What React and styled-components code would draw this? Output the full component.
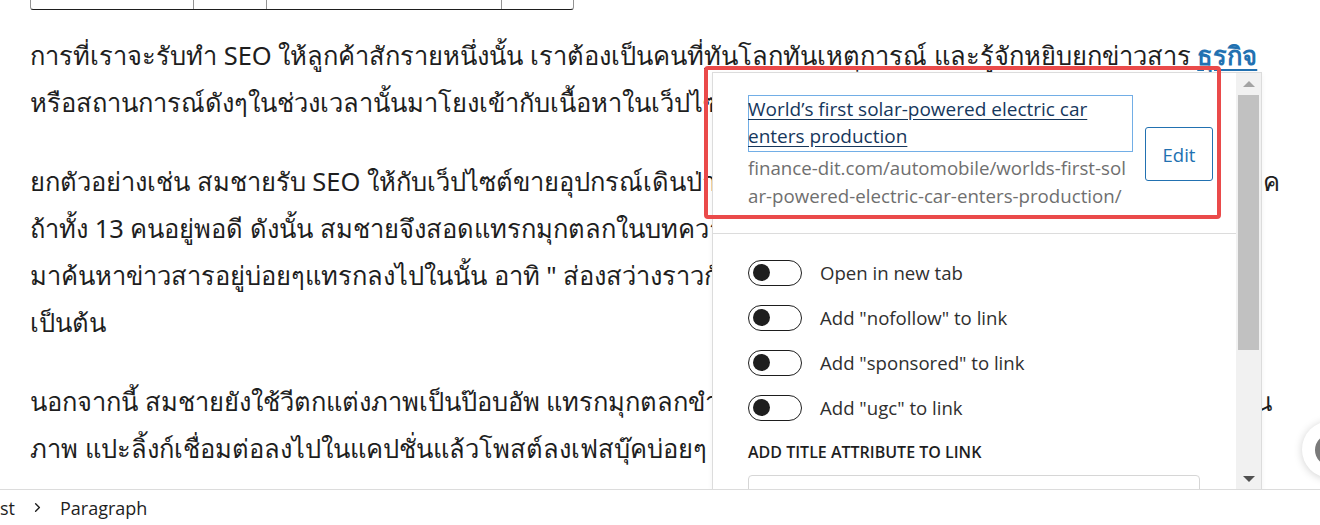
import React from 'react';
import styled, { createGlobalStyle } from 'styled-components';
import { ChevronRight } from 'lucide-react';

const GlobalStyle = createGlobalStyle`
  html, body {
    margin: 0;
    padding: 0;
    background: #fff;
    overflow: hidden;
  }
  body {
    font-family: "Noto Sans", "Open Sans", sans-serif;
    color: #1e1e1e;
  }
`;

const restOfParagraphs = [
  [
    'ยกตัวอย่างเช่น สมชายรับ SEO ให้กับเว็ปไซต์ขายอุปกรณ์เดินป่า ซึ่งช่วงนั้นมีข่าวทีมหมูป่าติดอยู่ในถ้ำหลวง เด็กๆทุกค',
    'ถ้าทั้ง 13 คนอยู่พอดี ดังนั้น สมชายจึงสอดแทรกมุกตลกในบทความ ที่เกี่ยวกับการเดินป่าและเข้าถ้ำ',
    'มาค้นหาข่าวสารอยู่บ่อยๆแทรกลงไปในนั้น อาทิ " ส่องสว่างราวกับมีไฟฉายคู่ใจ "',
    'เป็นต้น',
  ],
  [
    'นอกจากนี้ สมชายยังใช้วีตกแต่งภาพเป็นป๊อบอัพ แทรกมุกตลกขำขันเกี่ยวกับข่าวดังนั้น ให้คนอยากแชร์กันเป็นจำนวน',
    'ภาพ แปะลิ้งก์เชื่อมต่อลงไปในแคปชั่นแล้วโพสต์ลงเฟสบุ๊คบ่อยๆ',
  ],
];

const toggles = [
  'Open in new tab',
  'Add "nofollow" to link',
  'Add "sponsored" to link',
  'Add "ugc" to link',
];

const App = () => (
  <Page>
    <GlobalStyle />
    <Canvas>
      <Content>
        <TableEdge>
          <TableCell />
          <TableCell />
          <TableCell />
          <TableCell />
        </TableEdge>
        <Paragraph>
          <Line>
            การที่เราจะรับทำ SEO ให้ลูกค้าสักรายหนึ่งนั้น เราต้องเป็นคนที่
            <Marked>ทันโลกทันเหตุการณ์ และรู้จักหยิบยกข่าวสาร</Marked>{' '}
            <BodyLink href="#">ธุรกิจ</BodyLink>
          </Line>
          <Line>
            หรือสถานการณ์ดังๆในช่วงเวลานั้นมาโยงเข้ากับเนื้อหาในเว็ปไซต์ เพื่อดึงดูดความสนใจของผู้อ่าน
          </Line>
        </Paragraph>
        {restOfParagraphs.map((lines, i) => (
          <Paragraph key={i}>
            {lines.map((line, j) => (
              <Line key={j}>{line}</Line>
            ))}
          </Paragraph>
        ))}
      </Content>

      <Popover>
        <PopoverBody>
          <Preview>
            <PreviewText>
              <TitleBox>
                <TitleLink href="#">
                  World’s first solar-powered electric car <br />
                  enters production
                </TitleLink>
              </TitleBox>
              <Url>
                <span>finance-dit.com/automobile/worlds-first-sol</span>
                <span>ar-powered-electric-car-enters-production/</span>
              </Url>
            </PreviewText>
            <EditButton>Edit</EditButton>
          </Preview>
          <Settings>
            {toggles.map((label) => (
              <ToggleRow key={label}>
                <Toggle>
                  <Knob />
                </Toggle>
                <ToggleLabel>{label}</ToggleLabel>
              </ToggleRow>
            ))}
            <FieldLabel>Add title attribute to link</FieldLabel>
            <TitleInput>ด้านหน้า</TitleInput>
          </Settings>
        </PopoverBody>
        <Scrollbar>
          <Arrow $up />
          <Track>
            <Thumb />
          </Track>
          <Arrow />
        </Scrollbar>
      </Popover>

      <Highlight />

      <FloatButton>
        <FloatDot />
      </FloatButton>
    </Canvas>

    <Footer>
      <Crumb>st</Crumb>
      <ChevronRight size={15} strokeWidth={2.2} color="#1e1e1e" />
      <Crumb>Paragraph</Crumb>
    </Footer>
  </Page>
);

const Page = styled.div`
  width: 1320px;
  height: 525px;
  display: flex;
  flex-direction: column;
`;

const Canvas = styled.div`
  position: relative;
  height: 489px;
  flex-shrink: 0;
  overflow: hidden;
`;

const Content = styled.div`
  padding-left: 30px;
`;

const TableEdge = styled.div`
  width: 544px;
  height: 10px;
  display: grid;
  grid-template-columns: 163px 73px 235px 73px;
  border: 1px solid #949494;
  border-top: none;
  border-bottom: 1.5px solid #1e1e1e;
  border-radius: 0 0 3px 3px;
  box-sizing: border-box;
`;

const TableCell = styled.div`
  border-right: 1.5px solid #949494;

  &:last-child {
    border-right: none;
  }
`;

const Paragraph = styled.p`
  margin: 22px 0 0;
  font-size: 25.5px;
  line-height: 47px;
  color: #1e1e1e;

  & + & {
    margin-top: 32px;
  }
`;

const Line = styled.span`
  display: block;
  white-space: nowrap;
`;

const Marked = styled.span`
  text-decoration: underline;
  text-decoration-thickness: 1px;
  text-underline-offset: 3px;
`;

const BodyLink = styled.a`
  color: #2271b1;
  font-weight: 700;
  text-decoration: underline;
  text-underline-offset: 4px;
`;

const Popover = styled.div`
  position: absolute;
  left: 712px;
  top: 72px;
  width: 550px;
  height: 418px;
  display: flex;
  background: #fff;
  border: 1px solid #dcdcdc;
  border-bottom: none;
  box-sizing: border-box;
  box-shadow: 0 2px 6px rgba(0, 0, 0, 0.05);
  font-family: "Open Sans", "Noto Sans", sans-serif;
`;

const PopoverBody = styled.div`
  flex: 1;
  min-width: 0;
  overflow: hidden;
`;

const Preview = styled.div`
  height: 161px;
  box-sizing: border-box;
  padding: 22px 12px 0 35px;
  display: flex;
  align-items: flex-start;
  gap: 12px;
  border-bottom: 1px solid #dcdcdc;
`;

const PreviewText = styled.div`
  width: 385px;
  display: flex;
  flex-direction: column;
`;

const TitleBox = styled.div`
  height: 57px;
  box-sizing: border-box;
  border: 1px solid #72aee6;
`;

const TitleLink = styled.a`
  display: block;
  margin-left: -1px;
  font-size: 19px;
  line-height: 27px;
  color: #16375c;
  text-decoration: underline;
  text-underline-offset: 3px;
`;

const Url = styled.div`
  display: flex;
  flex-direction: column;
  margin-top: 2px;
  font-size: 18.7px;
  line-height: 28px;
  color: #6f6f6f;
  white-space: nowrap;
`;

const EditButton = styled.button`
  margin-top: 32px;
  width: 68px;
  height: 54px;
  border: 1px solid #2271b1;
  border-radius: 3px;
  background: #fff;
  color: #2271b1;
  font-family: inherit;
  font-size: 18.5px;
`;

const Settings = styled.div`
  padding: 16px 0 0 35px;
`;

const ToggleRow = styled.div`
  height: 45px;
  display: flex;
  align-items: center;
  gap: 18px;
`;

const Toggle = styled.div`
  width: 54px;
  height: 26px;
  box-sizing: border-box;
  border: 1.5px solid #1e1e1e;
  border-radius: 13px;
  display: flex;
  align-items: center;
  padding-left: 4px;
`;

const Knob = styled.div`
  width: 17px;
  height: 17px;
  border-radius: 50%;
  background: #1e1e1e;
`;

const ToggleLabel = styled.span`
  font-size: 18.6px;
  color: #2f2f2f;
`;

const FieldLabel = styled.div`
  margin-top: 12px;
  font-size: 16px;
  line-height: 20px;
  font-weight: 600;
  text-transform: uppercase;
  color: #1e1e1e;
`;

const TitleInput = styled.div`
  margin-top: 13px;
  width: 452px;
  height: 40px;
  box-sizing: border-box;
  border: 1px solid #d6d6d6;
  border-radius: 4px;
  padding: 11px 14px;
  font-size: 16px;
  color: #1e1e1e;
`;

const Scrollbar = styled.div`
  width: 25px;
  flex-shrink: 0;
  background: #f1f1f1;
  display: flex;
  flex-direction: column;
  align-items: center;
`;

const Arrow = styled.div`
  width: 0;
  height: 0;
  margin: 8px 0;
  border-left: 6px solid transparent;
  border-right: 6px solid transparent;
  ${({ $up }) =>
    $up
      ? 'border-bottom: 6px solid #a3a3a3;'
      : 'border-top: 6px solid #505050;'}
`;

const Track = styled.div`
  flex: 1;
  width: 100%;
  padding: 0 2px;
  box-sizing: border-box;
`;

const Thumb = styled.div`
  height: 255px;
  background: #c1c1c1;
`;

const Highlight = styled.div`
  position: absolute;
  left: 704px;
  top: 66px;
  width: 517px;
  height: 153px;
  box-sizing: border-box;
  border: 4px solid #ea4a4a;
  border-radius: 4px;
  pointer-events: none;
`;

const FloatButton = styled.div`
  position: absolute;
  left: 1302px;
  top: 421px;
  width: 57px;
  height: 57px;
  border-radius: 50%;
  background: #fff;
  box-shadow: 0 1px 8px rgba(0, 0, 0, 0.18);
  display: flex;
  align-items: center;
  justify-content: center;
`;

const FloatDot = styled.div`
  width: 32px;
  height: 32px;
  border-radius: 50%;
  background: #7a7a7a;
`;

const Footer = styled.div`
  height: 36px;
  border-top: 1px solid #dcdcdc;
  box-sizing: border-box;
  display: flex;
  align-items: center;
  gap: 15px;
  font-family: "Open Sans", "Noto Sans", sans-serif;
`;

const Crumb = styled.span`
  font-size: 18px;
  color: #1e1e1e;
`;

export default App;
